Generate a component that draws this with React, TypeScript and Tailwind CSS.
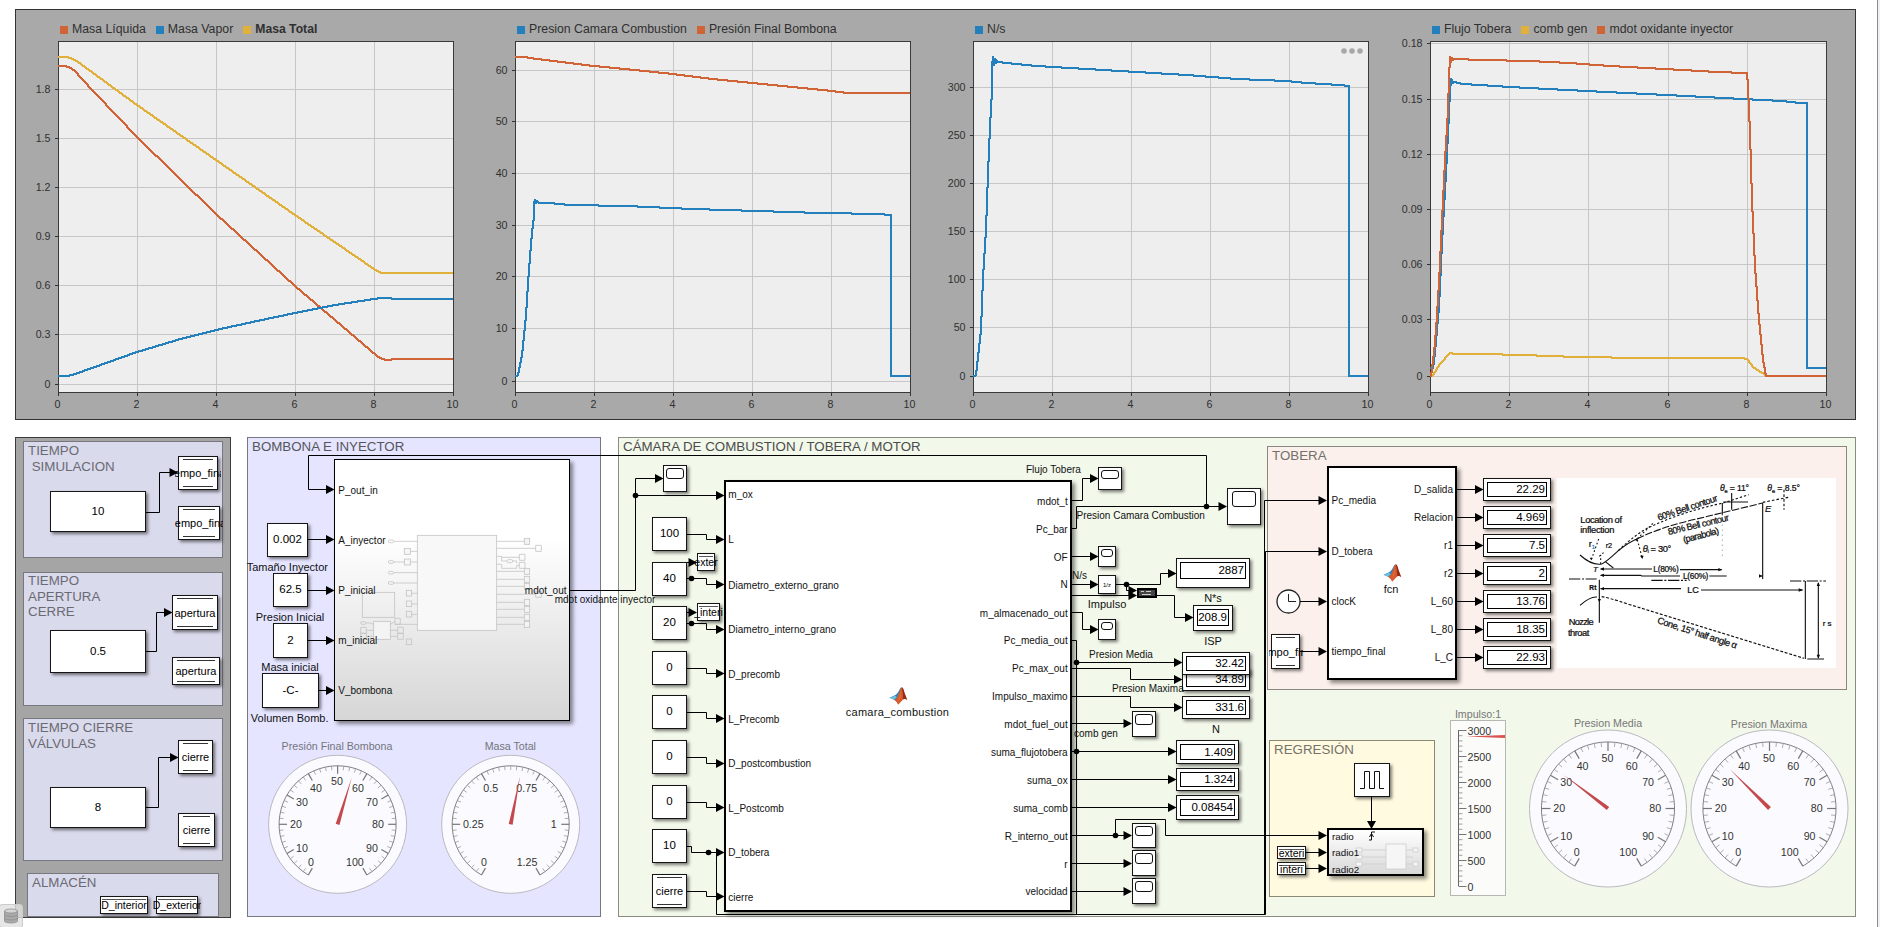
import React from "react";

/* ---------- charts ---------- */

const BLUE = "#2480bd";
const RED = "#d06437";
const YELLOW = "#e0b03b";

type Series = { color: string; points: string };
type ChartProps = {
  origin: number;
  left: number;
  width: number;
  legend: { name: string; color: string; bold?: boolean }[];
  ticks: [string, number][];
  series: Series[];
  menu?: boolean;
};

/* Traces a polyline (given in thirds of a pixel) with a square 2px brush, without antialiasing. */
function brush(points: string, origin: number) {
  const pts = points.split(" ").map((p) => {
    const [x, y] = p.split(",").map(Number);
    return [Math.round(origin + x / 3 - 1), Math.round(y / 3 - 1)];
  });
  let d = "";
  for (let i = 1; i < pts.length; i++) {
    const [x0, y0] = pts[i - 1];
    const [x1, y1] = pts[i];
    const n = Math.max(Math.abs(x1 - x0), Math.abs(y1 - y0));
    for (let k = 0; k <= n; k++) {
      const t = n === 0 ? 0 : k / n;
      d += `M${Math.round(x0 + (x1 - x0) * t)} ${Math.round(y0 + (y1 - y0) * t)}h2v2h-2z`;
    }
  }
  return d;
}

function Chart({ origin, left, width, legend, ticks, series, menu }: ChartProps) {
  const xs = [0, 1, 2, 3, 4, 5].map((i) => left + Math.round((i * width) / 5));
  return (
    <div className="flex flex-col pt-[7px]">
      <div className="flex h-[24px] items-start gap-[10px] pl-[44px] pt-[5px]">
        {legend.map((l) => (
          <div key={l.name} className="flex items-center gap-1">
            <svg width="8" height="8" className="mt-[2px]">
              <rect width="8" height="8" fill={l.color} />
            </svg>
            <span className={l.bold ? "text-[12.2px] leading-[14px] font-bold" : "text-[12.3px] leading-[14px]"}>{l.name}</span>
          </div>
        ))}
      </div>
      <svg width="457" height="376" viewBox={`${left - 42} 41 457 376`} fontSize="10.67" fill="#303030" className="overflow-visible">
        <rect x={left} y="41" width={width + 1} height="352" fill="#eeeeee" />
        {xs.slice(1, 5).map((x) => (
          <rect key={x} x={x} y="41" width="1" height="352" fill="#c6c6c6" />
        ))}
        {ticks.map(([t, y]) => (
          <g key={t}>
            <rect x={left} y={y} width={width} height="1" fill="#c6c6c6" />
            <rect x={left - 3} y={y} width="3" height="1" fill="#333" />
            <text x={left - 7.5} y={y + 4} textAnchor="end">{t}</text>
          </g>
        ))}
        {xs.map((x, i) => (
          <g key={x}>
            <rect x={x} y="393" width="1" height="3" fill="#333" />
            <text x={x - 0.5} y="408" textAnchor="middle">{i * 2}</text>
          </g>
        ))}
        <rect x={left + 0.5} y="41.5" width={width} height="351" fill="none" stroke="#3a3a3a" />
        {series.map((s) => (
          <path key={s.color} d={brush(s.points, origin)} fill={s.color} shapeRendering="crispEdges" />
        ))}
        {menu && (
          <g fill="#a8a8a8">
            <circle cx={left + 371} cy="51" r="2.8" />
            <circle cx={left + 379} cy="51" r="2.8" />
            <circle cx={left + 387} cy="51" r="2.8" />
          </g>
        )}
      </svg>
    </div>
  );
}

const CHARTS: ChartProps[] = [
  {
    origin: 0, left: 58, width: 395,
    legend: [{ name: "Masa Líquida", color: RED }, { name: "Masa Vapor", color: BLUE }, { name: "Masa Total", color: YELLOW, bold: true }],
    ticks: [["1.8", 89], ["1.5", 138], ["1.2", 187], ["0.9", 236], ["0.6", 285], ["0.3", 334], ["0", 384]],
    series: [
      { color: RED, points: "178,198 195,198 212,204 228,215 240,230 285,278 412,410 649,641 886,857 1005,960 1130,1068 1147,1077 1165,1080 1182,1077 1357,1077" },
      { color: BLUE, points: "178,1128 203,1127 225,1121 275,1103 412,1057 530,1020 649,990 770,962 886,938 1005,916 1123,896 1140,894 1170,894 1178,897 1357,897" },
      { color: YELLOW, points: "178,171 200,171 212,174 225,180 235,187 412,315 649,481 886,646 1123,807 1147,818 1357,818" },
    ],
  },
  {
    origin: 480, left: 515, width: 395,
    legend: [{ name: "Presion Camara Combustion", color: BLUE }, { name: "Presión Final Bombona", color: RED }],
    ticks: [["60", 70], ["50", 121], ["40", 173], ["30", 225], ["20", 276], ["10", 328], ["0", 381]],
    series: [
      { color: BLUE, points: "108,1128 115,1126 126,1065 137,945 145,850 151,770 156,695 161,650 163,606 166,600 167,610 171,603 176,608 210,609 270,614 440,619 640,626 835,632 1020,638 1210,643 1220,645 1233,645 1233,1128 1288,1128" },
      { color: RED, points: "108,171 135,171 150,175 220,184 343,197 465,210 580,222 700,236 820,248 940,261 1055,273 1105,279 1288,279" },
    ],
  },
  {
    origin: 940, left: 973, width: 395, menu: true,
    legend: [{ name: "N/s", color: BLUE }],
    ticks: [["300", 87], ["250", 135], ["200", 183], ["150", 231], ["100", 279], ["50", 327], ["0", 376]],
    series: [
      { color: BLUE, points: "102,1128 107,1126 114,1070 122,990 130,830 137,690 145,520 150,380 155,270 157,195 160,172 162,195 164,176 167,190 169,181 173,186 200,190 290,198 440,208 590,216 740,226 890,236 1040,243 1100,248 1200,255 1227,257 1227,1128 1282,1128" },
    ],
  },
  {
    origin: 1400, left: 1430, width: 396,
    legend: [{ name: "Flujo Tobera", color: BLUE }, { name: "comb gen", color: YELLOW }, { name: "mdot oxidante inyector", color: RED }],
    ticks: [["0.18", 43], ["0.15", 99], ["0.12", 154], ["0.09", 209], ["0.06", 264], ["0.03", 319], ["0", 376]],
    series: [
      { color: BLUE, points: "93,1104 98,1104 105,1055 117,920 127,730 137,520 146,340 150,270 152,236 154,254 157,240 159,250 163,246 190,251 240,256 330,262 445,268 560,274 680,280 800,286 915,292 1030,298 1145,304 1200,308 1221,309 1221,1104 1276,1104" },
      { color: YELLOW, points: "93,1128 100,1124 120,1092 151,1058 165,1062 250,1063 370,1066 530,1070 740,1073 1025,1075 1042,1078 1060,1100 1100,1128" },
      { color: RED, points: "92,1128 97,1105 103,1060 109,990 118,850 127,660 136,480 143,330 148,230 151,172 153,186 156,173 158,181 163,177 250,179 390,184 510,189 630,197 740,203 850,209 950,215 1042,219 1044,260 1049,400 1056,600 1066,800 1076,960 1088,1080 1098,1127 1276,1128" },
    ],
  },
];

/* ---------- canvas primitives ---------- */

type Anchor = "start" | "middle" | "end";

function Txt({ x, y, s = 10, a = "start", c = "#111", track = 0, children }: { x: number; y: number; s?: number; a?: Anchor; c?: string; track?: number; children: React.ReactNode }) {
  const shift = (Math.round(s * 0.905) - Math.round(s * 0.212)) / 2;
  const tx = a === "middle" ? "-50%" : a === "end" ? "-100%" : "0";
  return (
    <span
      className="absolute leading-[16px] whitespace-pre"
      style={{ left: x, top: y - 8 - shift, fontSize: s, color: c, letterSpacing: track, transform: `translateX(${tx})` }}
    >
      {children}
    </span>
  );
}

function Box({ x, y, w, h, thick, children }: { x: number; y: number; w: number; h: number; thick?: boolean; children?: React.ReactNode }) {
  return (
    <div
      className={
        thick
          ? "absolute border-2 border-black bg-white shadow-[3px_3px_4px_rgba(0,0,0,0.45)]"
          : "absolute flex items-center justify-center border border-[#151515] bg-white shadow-[2px_2px_3px_rgba(0,0,0,0.5)]"
      }
      style={{ left: x, top: y, width: w, height: h }}
    >
      {children}
    </div>
  );
}

function Const({ x, y, w = 35, h = 34, v }: { x: number; y: number; w?: number; h?: number; v: string }) {
  return (
    <Box x={x} y={y} w={w} h={h}>
      <span className="pb-[2px] text-[11.5px] leading-[14px] text-black">{v}</span>
    </Box>
  );
}

function Store({ x, y, w, h, v, small, clip = 2 }: { x: number; y: number; w: number; h: number; v: string; small?: boolean; clip?: number }) {
  return (
    <>
      <Box x={x} y={y} w={w} h={h}>
        <div className={small ? "h-full w-full px-[1px] py-[2px]" : "h-full w-full px-[4px] py-[2px]"}>
          <div className={small ? "h-full w-full border-t border-[#555]" : "h-full w-full border-t border-b border-[#333]"} />
        </div>
      </Box>
      <div className="absolute flex items-center justify-center overflow-hidden" style={{ left: x - clip, top: y, width: w + 2 * clip, height: h }}>
        <span className={small ? "text-[10.5px] leading-[12px] whitespace-pre text-black" : "text-[11px] leading-[14px] whitespace-pre text-black"}>{v}</span>
      </div>
    </>
  );
}

function Scope({ x, y, w, h }: { x: number; y: number; w: number; h: number }) {
  return (
    <div
      className="absolute flex justify-center border border-[#151515] bg-white pt-[2px] shadow-[2px_2px_3px_rgba(0,0,0,0.5)]"
      style={{ left: x, top: y, width: w, height: h }}
    >
      <div className="h-[48%] w-[78%] rounded-[3px] border-[1.5px] border-[#111]" />
    </div>
  );
}

function Display({ x, y, w = 68, h = 23, v }: { x: number; y: number; w?: number; h?: number; v: string }) {
  return (
    <div
      className="absolute border border-[#151515] bg-white p-[3px] shadow-[2px_2px_3px_rgba(0,0,0,0.5)]"
      style={{ left: x, top: y, width: w, height: h }}
    >
      <div className="flex items-center justify-end border border-black pr-[1px]" style={{ height: Math.min(h - 8, 17) }}>
        <span className="text-[11.5px] leading-[13px] text-black">{v}</span>
      </div>
    </div>
  );
}

function MatlabLogo({ x, y }: { x: number; y: number }) {
  return (
    <svg className="absolute" style={{ left: x, top: y }} width="19" height="18" viewBox="0 0 54 54">
      <path d="M0 32L18 24Q24 20 28 12Q32 2 37 1L30 32L22 44L14 38Z" fill="#2f86b8" />
      <path d="M0 32L14 38L22 30L16 26Z" fill="#6cc0dd" />
      <path d="M14 38Q22 36 28 20Q33 2 37 1Q41 2 45 18L53 39Q46 33 40 38L26 53Q22 42 14 38Z" fill="#d9582a" />
      <path d="M37 1Q41 2 45 18L53 39Q46 33 41 37Q41 16 37 1Z" fill="#8e2a1c" />
      <path d="M35 8Q33 26 26 45Q34 30 35 8Z" fill="#f7a861" />
    </svg>
  );
}

/* ---------- gauges ---------- */

function Gauge({ cx, cy, r, labels, step, minor, angle }: { cx: number; cy: number; r: number; labels: [string, number, number][]; step: number; minor: number; angle: number }) {
  const ir = r * 0.848;
  const at = (deg: number, rad: number) => {
    const t = (deg * Math.PI) / 180;
    return [cx + rad * Math.sin(t), cy - rad * Math.cos(t)];
  };
  const ticks: React.ReactNode[] = [];
  const n = Math.round(300 / step) * minor;
  for (let i = 0; i <= n; i++) {
    const d = -150 + (i * 300) / n;
    const major = i % minor === 0;
    const [x1, y1] = at(d, ir);
    const [x2, y2] = at(d, ir - (major ? r * 0.115 : r * 0.06));
    ticks.push(<line key={i} x1={x1} y1={y1} x2={x2} y2={y2} stroke={major ? "#777" : "#999"} strokeWidth={major ? 1.2 : 0.8} />);
  }
  const [sx, sy] = at(-150, ir);
  const [ex, ey] = at(150, ir);
  const [nx, ny] = at(angle, r * 0.71);
  const [bx, by] = at(angle + 90, 2);
  const [dx, dy] = at(angle - 90, 2);
  return (
    <g>
      <circle cx={cx} cy={cy} r={r} fill="#fbfbff" stroke="#b9b9bf" />
      <path d={`M${sx} ${sy}A${ir} ${ir} 0 1 1 ${ex} ${ey}`} fill="none" stroke="#808085" strokeWidth="1" />
      {ticks}
      {labels.map(([t, x, y]) => (
        <text key={t} x={x} y={y + 3.7} textAnchor="middle" fontSize="10.67" fill="#333">{t}</text>
      ))}
      <polygon points={`${bx},${by} ${nx},${ny} ${dx},${dy}`} fill="#c4494c" />
    </g>
  );
}

const dial100 = (cx: number, cy: number, k: number): [string, number, number][] => [
  ["0", cx - 26.7 * k, cy + 37.7 * k], ["10", cx - 35.7 * k, cy + 23.7 * k], ["20", cx - 41.7 * k, cy],
  ["30", cx - 35.7 * k, cy - 22.3 * k], ["40", cx - 21.7 * k, cy - 36.3 * k], ["50", cx - 0.6, cy - 43.3 * k],
  ["60", cx + 20.3 * k, cy - 36.3 * k], ["70", cx + 34.3 * k, cy - 22.3 * k], ["80", cx + 40.3 * k, cy],
  ["90", cx + 34.3 * k, cy + 23.7 * k], ["100", cx + 17.3 * k, cy + 37.7 * k],
];

/* ---------- wires ---------- */

type Wire = { d: string; tip?: [number, number] };
const WIRES: Wire[] = [
  { d: "M146 512.5H159.5V472.5H172", tip: [178, 472.5] },
  { d: "M146 651.5H156.5V612.5H166", tip: [172.5, 612.5] },
  { d: "M146 807.5H158.5V757.5H172", tip: [178.5, 757.5] },
  { d: "M1206.5 506.5V455.5H308.5V489.5H328", tip: [334.5, 489.5] },
  { d: "M307 539.5H328", tip: [334.5, 539.5] },
  { d: "M307 590.5H328", tip: [334.5, 590.5] },
  { d: "M307 640.5H328", tip: [334.5, 640.5] },
  { d: "M318 690.5H328", tip: [334.5, 690.5] },
  { d: "M570 590.5H635.5V478.5H656", tip: [663.5, 478.5] },
  { d: "M635.5 495.5H718", tip: [724.5, 495.5] },
  { d: "M687 534.5H706.5V539.5H718", tip: [724.5, 539.5] },
  { d: "M687 578.5H706.5V584.5H718", tip: [724.5, 584.5] },
  { d: "M687 623.5H706.5V629.5H718", tip: [724.5, 629.5] },
  { d: "M687 668.5H706.5V673.5H718", tip: [724.5, 673.5] },
  { d: "M687 712.5H706.5V718.5H718", tip: [724.5, 718.5] },
  { d: "M687 757.5H706.5V763.5H718", tip: [724.5, 763.5] },
  { d: "M687 802.5H706.5V807.5H718", tip: [724.5, 807.5] },
  { d: "M687 846.5H691.5V852.5H718", tip: [724.5, 852.5] },
  { d: "M687 891.5H706.5V896.5H718", tip: [724.5, 896.5] },
  { d: "M687 562.5H692", tip: [697, 562.5] },
  { d: "M687 612.5H692", tip: [697, 612.5] },
  { d: "M716.5 852.5V914.5H1265.5V551.5H1320", tip: [1327, 551.5] },
  { d: "M1264.5 914V500.5H1320", tip: [1327, 500.5] },
  { d: "M1072 500.5H1082.5V478.5H1092", tip: [1098.5, 478.5] },
  { d: "M1072 528.5H1076.5V506.5H1220", tip: [1227, 506.5] },
  { d: "M1072 556.5H1092", tip: [1098.5, 556.5] },
  { d: "M1072 584.5H1092", tip: [1098.5, 584.5] },
  { d: "M1116 584.5H1160.5V573.5H1170", tip: [1176.5, 573.5] },
  { d: "M1126.5 584.5V590.5H1132", tip: [1137, 590.5] },
  { d: "M1072 595.5H1132", tip: [1137, 595.5] },
  { d: "M1156 595.5H1174.5V617.5H1187", tip: [1193.5, 617.5] },
  { d: "M1072 612.5H1082.5V629.5H1092", tip: [1098.5, 629.5] },
  { d: "M1072 640.5H1076.5V662.5H1176", tip: [1182.5, 662.5] },
  { d: "M1072 668.5H1130.5V679.5H1176", tip: [1182.5, 679.5] },
  { d: "M1072 696.5H1130.5V707.5H1176", tip: [1182.5, 707.5] },
  { d: "M1072 723.5H1126", tip: [1132, 723.5] },
  { d: "M1072 751.5H1170", tip: [1176.5, 751.5] },
  { d: "M1072 779.5H1170", tip: [1176.5, 779.5] },
  { d: "M1072 807.5H1170", tip: [1176.5, 807.5] },
  { d: "M1072 835.5H1126", tip: [1132, 835.5] },
  { d: "M1115.5 835.5V819.5H1165.5V835.5H1320", tip: [1327, 835.5] },
  { d: "M1072 863.5H1126", tip: [1132, 863.5] },
  { d: "M1072 891.5H1126", tip: [1132, 891.5] },
  { d: "M1076.5 662V914" },
  { d: "M1300 601.5H1320", tip: [1327, 601.5] },
  { d: "M1300 651.5H1320", tip: [1327, 651.5] },
  { d: "M1306 852.5H1320", tip: [1327, 852.5] },
  { d: "M1306 868.5H1320", tip: [1327, 868.5] },
  ...[489.5, 517.5, 545.5, 573.5, 601.5, 629.5, 657.5].map((y): Wire => ({ d: `M1457 ${y}H1477`, tip: [1483.5, y] })),
];
const DOTS: [number, number][] = [
  [635.5, 495.5], [691.5, 578.5], [691.5, 623.5], [708.5, 852.5], [1206.5, 506.5], [1126.5, 584.5], [1076.5, 662.5], [1076.5, 751.5], [1115.5, 835.5],
];

function SubsystemPreview() {
  return (
    <g transform="translate(240 430) scale(0.333333)" fill="none" stroke="#c4c4c4" strokeWidth="2.4">
      <rect x="532" y="316" width="238" height="285" fill="#f8f8f8" />
      <rect x="367" y="487" width="97" height="75" />
      <rect x="401" y="574" width="50" height="54" fill="#f4f4f4" />
      {[334, 396, 428, 459].map((y) => (
        <g key={y}>
          <rect x="445" y={y - 4} width="16" height="8" rx="4" />
          <path d={`M461 ${y}H532`} />
        </g>
      ))}
      {[364, 396].map((y) => (
        <rect key={y} x="493" y={y - 9} width="18" height="18" fill="#f6f6f6" />
      ))}
      <path d="M511 364H532M464 583H532M515 490H532M515 522H532M515 553H532M378 579H390L401 583M451 583L465 575M379 601H401M379 619H401M451 601H473M451 619H473" />
      {[490, 522, 553, 636].map((y) => (
        <rect key={y} x="499" y={y - 9} width="16" height="17" />
      ))}
      <rect x="362" y="575" width="16" height="8" rx="4" />
      <path d="M362 592h17v18h-17zM362 610h17v18h-17zM473 592h17v18h-17zM473 610h17v18h-17zM465 565h16v18h-16z" />
      {[334, 424, 448, 469, 517, 538, 562, 583].map((y) => (
        <g key={y}>
          <path d={`M770 ${y}H852`} />
          <rect x="853" y={y - 9} width="16" height="18" fill="#f4f4f4" />
        </g>
      ))}
      <path d="M770 355H887M770 379H785V382H838M785 382V393H800M818 393H830V400M770 403H785V415H830V406H838M770 493H887M887 346h17v18h-17zM887 484h17v18h-17zM838 373h17v18h-17zM838 397h17v18h-17z" />
      <rect x="801" y="389" width="17" height="9" rx="4" />
    </g>
  );
}

function NozzleSketch() {
  return (
    <svg className="absolute left-[1557px] top-[478px] bg-white" width="279" height="190" viewBox="21 115 837 570" fontSize="28" fill="#0c0c0c">
      <g fill="none" stroke="#111" strokeWidth="3.4">
        <path d="M90 346Q125 378 155 373Q168 368 205 333Q235 308 262 297" />
        <path d="M262 297Q340 260 440 238L638 190" strokeDasharray="22 5" />
        <path d="M205 333Q260 280 300 262Q400 215 520 190L596 165" strokeDasharray="7 6" />
        <path d="M262 297L310 250M146 298L124 360M262 300L277 356M148 350L165 335M152 373V345" strokeDasharray="5 7" />
        <path d="M638 190V418M520 187H594M517 190V225M545 160V210" />
        <path d="M638 188L720 172M702 150V210" strokeDasharray="8 6" />
        <path d="M517 225V350" strokeDasharray="3 12" strokeWidth="1.5" />
        <path d="M152 388H306M390 390H515M152 407H272L275 409H390M478 409H530M632 409h5" />
        <path d="M57 418H140M304 422H410M720 424H828" strokeDasharray="34 5 6 5" />
        <path d="M152 447H393M453 451H757M148 420V549M90 497Q120 470 141 472M766 424V658M772 658H822M805 430V654" />
        <path d="M155 471Q170 472 240 495L762 656" strokeDasharray="9 5" />
        <path d="M165 365L190 385" />
      </g>
      <path d="M150 388l12-5v10zM150 407l12-5v10zM150 447l12-5v10zM517 390l-12-5v10zM637 409l-10-5v10zM760 451l-14-5v10zM805 427l-5 12h10zM805 657l-5-12h10zM124 362l-5-8h9zM277 358l-7-10h11zM262 296l-7 4 8 6zM148 488l-5-10h10z" />
      <g stroke="#0c0c0c" strokeWidth="0.7">
        <text x="91" y="249" textLength="125">Location of</text>
        <text x="91" y="280" textLength="102">inflection</text>
        <text x="116" y="322">r<tspan fontSize="18" dy="5" fill="#2080d0" stroke="#2080d0">1</tspan></text>
        <text x="167" y="326" fontSize="22">r2</text>
        <text x="129" y="397" fontSize="24" fontStyle="italic">T</text>
        <text x="118" y="450" fontSize="20" fontWeight="bold">Rt</text>
        <text x="278" y="336" textLength="86"><tspan fontStyle="italic">θ</tspan><tspan fontSize="17" dy="5">i</tspan><tspan dy="-5"> = 30°</tspan></text>
        <text x="510" y="154" fontSize="26" textLength="87"><tspan fontStyle="italic">θ</tspan><tspan fontSize="17" dy="5">e</tspan><tspan dy="-5"> = 11°</tspan></text>
        <text x="652" y="154" fontSize="26" textLength="98"><tspan fontStyle="italic">θ</tspan><tspan fontSize="17" dy="5">e</tspan><tspan dy="-5"> = 8.5°</tspan></text>
        <text x="645" y="218" fontStyle="italic">E</text>
        <text transform="translate(326 243) rotate(-18.5)" textLength="188">60% Bell contour</text>
        <text transform="translate(356 286) rotate(-13.5)" textLength="188">80% Bell contour</text>
        <text transform="translate(402 310) rotate(-15)" textLength="110">(parabola)</text>
        <text x="310" y="396" fontSize="25" textLength="76">L(80%)</text>
        <text x="399" y="418" fontSize="25" textLength="76">L(60%)</text>
        <text x="412" y="461" fontSize="27">LC</text>
        <text x="56" y="557" textLength="75">Nozzle</text>
        <text x="54" y="588" textLength="64">throat</text>
        <text transform="translate(320 550) rotate(18)" textLength="250">Cone, 15° half angle α</text>
        <text x="818" y="558" fontSize="24">r s</text>
      </g>
    </svg>
  );
}

/* ---------- labels ---------- */

const IN_PORTS: [string, number][] = [
  ["m_ox", 498.7], ["L", 543.3], ["Diametro_externo_grano", 589], ["Diametro_interno_grano", 633], ["D_precomb", 678],
  ["L_Precomb", 723], ["D_postcombustion", 767], ["L_Postcomb", 812], ["D_tobera", 856], ["cierre", 901],
];
const OUT_PORTS: [string, number][] = [
  ["mdot_t", 505], ["Pc_bar", 533], ["OF", 561], ["N", 588.5], ["m_almacenado_out", 617], ["Pc_media_out", 644], ["Pc_max_out", 672],
  ["Impulso_maximo", 700], ["mdot_fuel_out", 728], ["suma_flujotobera", 756], ["suma_ox", 784], ["suma_comb", 812], ["R_interno_out", 840], ["r", 868], ["velocidad", 895],
];
const CONSTS: [string, number][] = [["100", 517], ["40", 562], ["20", 606], ["0", 651], ["0", 695], ["0", 740], ["0", 785], ["10", 829]];
const TOBERA_OUT: [string, string][] = [["D_salida", "22.29"], ["Relacion", "4.969"], ["r1", "7.5"], ["r2", "2"], ["L_60", "13.76"], ["L_80", "18.35"], ["L_C", "22.93"]];

const TITLE = "text-[13.33px] leading-[15.6px] whitespace-pre";

export default function App() {
  return (
    <div className="relative h-[927px] w-[1880px] overflow-hidden bg-white font-['Liberation_Sans',Arial,sans-serif] text-[#303030]">
      {/* coloured areas */}
      <div className="flex h-full w-[1856px] flex-col pl-[15px] pt-[9px]">
        <section className="grid h-[411px] shrink-0 grid-cols-[457px_458px_457px_1fr] border border-[#333] bg-[#a9a9a9]">
          {CHARTS.map((c) => (
            <Chart key={c.origin} {...c} />
          ))}
        </section>

        <div className="mt-[17px] flex h-[481px] shrink-0 items-start">
          <section className="flex h-[481px] w-[216px] shrink-0 flex-col border border-[#3c3c3c] bg-[#a5a5a5] px-[7px] pt-[3px]">
            <div className={`${TITLE} h-[117px] border border-[#77777f] bg-[#dadaed] pl-[4px] pt-px text-[#6a6a72]`}>{"TIEMPO\n SIMULACION"}</div>
            <div className={`${TITLE} mt-[14px] h-[134px] border border-[#77777f] bg-[#dadaed] pl-[4px] text-[#6a6a72]`}>{"TIEMPO\nAPERTURA\nCERRE"}</div>
            <div className={`${TITLE} mt-[12px] h-[143px] border border-[#77777f] bg-[#dadaed] pl-[4px] pt-px text-[#6a6a72]`}>{"TIEMPO CIERRE\nVÁLVULAS"}</div>
            <div className={`${TITLE} mx-[4px] mt-[12px] h-[44px] border border-[#77777f] bg-[#dadaed] pl-[4px] pt-px text-[#6a6a72]`}>ALMACÉN</div>
          </section>
          <section className={`${TITLE} ml-[16px] h-[480px] w-[354px] shrink-0 border border-[#77777f] bg-[#e5e5ff] pl-[4px] pt-px text-[#55555c]`}>BOMBONA E INYECTOR</section>
          <section className="ml-[17px] flex h-[480px] flex-1 flex-col border border-[#888c82] bg-[#f2f8ea]">
            <div className={`${TITLE} h-[8px] pl-[4px] pt-px text-[#4c4c4c]`}>CÁMARA DE COMBUSTION / TOBERA / MOTOR</div>
            <div className={`${TITLE} mr-[8px] h-[244px] w-[580px] self-end border border-[#8b8680] bg-[#fbf0eb] pl-[4px] pt-px text-[#74706c]`}>TOBERA</div>
            <div className={`${TITLE} ml-[650px] mt-[50px] h-[157px] w-[166px] border border-[#8c8a74] bg-[#fffae0] pl-[4px] pt-px text-[#74726a]`}>REGRESIÓN</div>
          </section>
        </div>
      </div>

      {/* diagram nodes on the canvas */}
      <Const x={50} y={491} w={96} h={41} v="10" />
      <Const x={50} y={630} w={96} h={43} v="0.5" />
      <Const x={50} y={787} w={96} h={41} v="8" />
      <Store x={178} y={506} w={42} h={34} v="tiempo_final" clip={3} />
      <Store x={172} y={657} w={48} h={28} v="apertura" />
      <Store x={178} y={740} w={35} h={34} v="cierre" />
      <Store x={178} y={813} w={37} h={34} v="cierre" />
      <Store x={100} y={896} w={48} h={18} v="D_interior" small clip={1} />
      <Store x={156} y={896} w={42} h={18} v="D_exterior" small clip={3} />

      <div className="absolute left-[334px] top-[459px] h-[262px] w-[236px] border-[1.5px] border-black bg-linear-to-b from-white from-30% to-[#d6d6d6] shadow-[3px_3px_4px_rgba(0,0,0,0.45)]" />
      <Const x={267} y={523} w={41} v="0.002" />
      <Const x={273} y={573} w={35} v="62.5" />
      <Const x={273} y={623} w={35} h={35} v="2" />
      <Const x={262} y={673} w={57} h={35} v="-C-" />

      <Box x={724} y={480} w={348} h={432} thick />
      {CONSTS.map(([v, y]) => (
        <Const key={y} x={652} y={y} v={v} />
      ))}
      <Store x={652} y={874} w={35} h={34} v="cierre" />
      <Scope x={663} y={465} w={24} h={27} />

      <Scope x={1098} y={467} w={24} h={23} />
      <Scope x={1227} y={488} w={34} h={37} />
      <Scope x={1098} y={546} w={18} h={21} />
      <Box x={1098} y={575} w={18} h={19}>
        <span className="text-[6px] leading-[8px] text-black">1/z</span>
      </Box>
      <Scope x={1098} y={619} w={18} h={21} />
      <Scope x={1132} y={711} w={24} h={26} />
      <Scope x={1132} y={823} w={24} h={25} />
      <Scope x={1132} y={850} w={24} h={26} />
      <Scope x={1132} y={878} w={24} h={26} />

      <Box x={1327} y={466} w={130} h={214} thick />
      <Box x={1354} y={763} w={36} h={34}>
        <svg width="26" height="22" viewBox="0 0 26 22" fill="none" stroke="#111" strokeWidth="1">
          <path d="M1 19.5H5.5V2.5H10.5V19.5H15.5V2.5H20.5V19.5H25" />
        </svg>
      </Box>
      <div className="absolute left-[1327px] top-[828px] h-[48px] w-[97px] border-2 border-black bg-linear-to-b from-white to-[#d8d8d8] shadow-[3px_3px_4px_rgba(0,0,0,0.45)]" />

      <Store x={178} y={456} w={40} h={34} v="" />
      <Store x={172} y={595} w={46} h={35} v="" />

      <svg className="absolute inset-0" width="1880" height="927">
        <SubsystemPreview />
        <circle cx="1288.5" cy="601.5" r="11.5" fill="#fff" stroke="#222" strokeWidth="1.3" />
        <path d="M1288.5 594V601.5H1296" fill="none" stroke="#222" />
        <g fill="#f6f6f6" stroke="#cdcdcd" strokeWidth="0.8">
          <rect x="1386" y="844" width="20" height="25" />
          <path d="M1362 850H1386M1362 857H1386M1362 864H1386M1406 850H1413M1406 857H1413M1406 864H1413" />
          <rect x="1356" y="848" width="6" height="4" />
          <rect x="1356" y="855" width="6" height="4" />
          <rect x="1356" y="862" width="6" height="4" />
          <rect x="1413" y="848" width="5" height="4" />
          <rect x="1413" y="862" width="5" height="4" />
        </g>
        {WIRES.map((w, i) => (
          <g key={i}>
            <path d={w.d} fill="none" stroke="#000" />
            {w.tip && <path d={`M${w.tip[0]} ${w.tip[1]}l-8.5 -4.5v9z`} />}
          </g>
        ))}
        <path d="M1371.5 797V824" stroke="#000" />
        <path d="M1371.5 829l-4.5 -8h9z" />
        <path d="M1369 840H1371.500V832H1375M1369.500 837L1371.500 833.500L1373.500 837" fill="none" stroke="#111" />
        {DOTS.map(([x, y]) => (
          <circle key={`${x}-${y}`} cx={x} cy={y} r="2.8" />
        ))}
        <rect x="1138" y="589" width="18" height="8" fill="#444" stroke="#000" strokeWidth="2" />
        <path d="M1141 591.5h3M1146 591.5h5M1142 594.5h9" stroke="#ccc" />

        <Gauge cx={337.6} cy={824.3} r={69} step={30} minor={5} angle={16.8} labels={dial100(337.6, 824.3, 1)} />
        <Gauge
          cx={510.7} cy={824.3} r={69} step={60} minor={10} angle={11}
          labels={[["0", 484, 862], ["0.25", 473.3, 824.3], ["0.5", 490.7, 788], ["0.75", 526.7, 788], ["1", 553.7, 824.3], ["1.25", 527, 862]]}
        />
        <Gauge cx={1608} cy={808.5} r={78.5} step={30} minor={5} angle={-52.7} labels={dial100(1608, 808.5, 1.17)} />
        <Gauge cx={1769.5} cy={808.5} r={78.5} step={30} minor={5} angle={-45.3} labels={dial100(1769.5, 808.5, 1.17)} />

        <rect x="1450.5" y="720.5" width="55" height="175" fill="#fbfcfa" stroke="#b5b8b0" />
        <path d="M1458.5 730V886" stroke="#666" />
        {Array.from({ length: 31 }, (_, i) => (
          <path key={i} d={`M1458.5 ${730.5 + i * 5.2}h${i % 5 === 0 ? 8 : 4}`} stroke="#777" strokeWidth={i % 5 === 0 ? 1 : 0.7} />
        ))}
        {[3000, 2500, 2000, 1500, 1000, 500, 0].map((v, i) => (
          <text key={v} x="1467.500" y={734.5 + i * 26} fontSize="10.67" fill="#333">{v}</text>
        ))}
        <path d="M1466 736.5L1505 735V738Z" fill="#d9534f" />
      </svg>

      <div className="absolute left-[175px] top-[456px] flex h-[34px] w-[46px] items-center justify-center overflow-hidden">
        <span className="text-[11px] leading-[14px] whitespace-pre text-black">tiempo_final</span>
      </div>
      <div className="absolute left-[171px] top-[595px] flex h-[35px] w-[48px] items-center justify-center">
        <span className="text-[11px] leading-[14px] whitespace-pre text-black">apertura</span>
      </div>
      <Store x={1271} y={634} w={29} h={35} v="tiempo_final" clip={2.500} />
      <Store x={697} y={553} w={18} h={18} v="exter" small clip={3} />
      <Store x={697} y={603} w={23} h={18} v="_interi" small clip={3} />
      <Store x={1277} y={846} w={29} h={13} v="exteri" small clip={1} />
      <Store x={1277} y={862} w={29} h={13} v="interi" small clip={1} />

      <Display x={1182} y={668} v="34.89" />
      <Txt x={1112} y={692}>Presion Maxima</Txt>
      <Display x={1176} y={558} w={74} h={30} v="2887" />
      <Display x={1193} y={605} w={40} h={26} v="208.9" />
      <Display x={1182} y={652} v="32.42" />
      <Display x={1182} y={696} v="331.6" />
      <Display x={1176} y={740} w={63} h={24} v="1.409" />
      <Display x={1176} y={768} w={63} v="1.324" />
      <Display x={1176} y={795} w={63} h={25} v="0.08454" />
      {TOBERA_OUT.map(([name, v], i) => (
        <React.Fragment key={name}>
          <Display x={1483} y={478 + i * 28} v={v} />
          <Txt x={1453} y={493 + i * 28} a="end">{name}</Txt>
        </React.Fragment>
      ))}

      <Txt x={287.3} y={571} s={11} a="middle">Tamaño Inyector</Txt>
      <Txt x={290} y={621} s={11} a="middle">Presion Inicial</Txt>
      <Txt x={290} y={671} s={11} a="middle">Masa inicial</Txt>
      <Txt x={289.700} y={722} s={11} a="middle">Volumen Bomb.</Txt>
      <Txt x={338.3} y={494}>P_out_in</Txt>
      <Txt x={338.3} y={544}>A_inyector</Txt>
      <Txt x={338.3} y={594}>P_inicial</Txt>
      <Txt x={338.3} y={644.5}>m_inicial</Txt>
      <Txt x={338.3} y={694.5}>V_bombona</Txt>
      <Txt x={566.5} y={594} a="end">mdot_out</Txt>
      <Txt x={554.7} y={603}>mdot oxidante inyector</Txt>
      <Txt x={337} y={750} s={10.67} a="middle" c="#74747c">Presión Final Bombona</Txt>
      <Txt x={510.3} y={750} s={10.67} a="middle" c="#74747c">Masa Total</Txt>

      {IN_PORTS.map(([t, y]) => (
        <Txt key={t} x={728.3} y={y}>{t}</Txt>
      ))}
      {OUT_PORTS.map(([t, y]) => (
        <Txt key={t} x={1067.7} y={y} a="end">{t}</Txt>
      ))}
      <MatlabLogo x={889} y={687} />
      <Txt x={897.5} y={716} s={11} a="middle" track={0.25}>camara_combustion</Txt>
      <Txt x={1026} y={473}>Flujo Tobera</Txt>
      <Txt x={1076.5} y={519}>Presion Camara Combustion</Txt>
      <Txt x={1072} y={579}>N/s</Txt>
      <Txt x={1107} y={608} s={11} a="middle">Impulso</Txt>
      <Txt x={1213} y={602} s={11} a="middle">N*s</Txt>
      <Txt x={1213} y={645} s={11} a="middle">ISP</Txt>
      <Txt x={1089} y={658}>Presion Media</Txt>
      <Txt x={1216} y={733} s={11} a="middle">N</Txt>
      <Txt x={1074} y={737}>comb gen</Txt>

      <Txt x={1331.5} y={504}>Pc_media</Txt>
      <Txt x={1331.5} y={555}>D_tobera</Txt>
      <Txt x={1331.5} y={605}>clocK</Txt>
      <Txt x={1331.5} y={655}>tiempo_final</Txt>
      <MatlabLogo x={1382.5} y={564} />
      <Txt x={1391} y={593} s={11} a="middle">fcn</Txt>
      <Txt x={1332} y={840} s={9.8}>radio</Txt>
      <Txt x={1332} y={856} s={9.8}>radio1</Txt>
      <Txt x={1332} y={873} s={9.8}>radio2</Txt>
      <Txt x={1478} y={718} s={10.67} a="middle" c="#777">Impulso:1</Txt>
      <Txt x={1608} y={727} s={10.67} a="middle" c="#777">Presion Media</Txt>
      <Txt x={1769} y={728} s={10.67} a="middle" c="#777">Presion Maxima</Txt>
      <NozzleSketch />

      {/* window edge and corner control */}
      <div className="absolute top-0 right-0 h-full w-[3px] border-l border-[#8a8a98] bg-[#f0f0f4]" />
      <div className="absolute -left-px top-[904px] flex h-[24px] w-[24px] items-center justify-center rounded-[3px] border border-[#ccc] bg-[#e0e0e0]/80">
        <svg width="16" height="16" viewBox="0 0 16 16" fill="#aaa" stroke="#888" strokeWidth="0.7">
          <path d="M1.500 3v10c0 1.300 3 2 6.500 2s6.500-.7 6.500-2V3" />
          <path d="M1.500 6.500c0 1.200 3 1.900 6.500 1.900s6.500-.7 6.500-1.900M1.500 10c0 1.200 3 1.900 6.500 1.900s6.500-.7 6.500-1.900" fill="none" />
          <ellipse cx="8" cy="3" rx="6.500" ry="2" fill="#d5d5d5" />
        </svg>
      </div>
    </div>
  );
}
